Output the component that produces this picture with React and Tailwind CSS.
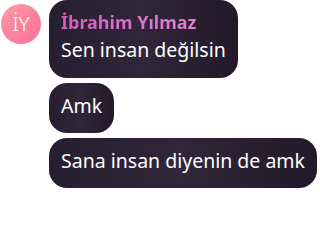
import React from 'react';

const bubble = 'rounded-[18px] bg-gradient-to-r from-[#261e31] via-[#2f2739] to-[#221a2b] px-3 text-white text-[19.5px] leading-[28px] whitespace-nowrap';

export default function App() {
    return (
        <div className="w-[320px] h-[240px] bg-white overflow-hidden font-['Noto_Sans','Open_Sans',sans-serif]">
            <div className="flex items-start gap-2 pl-[1px]">
                {/* Avatar */}
                <div className="mt-1 w-10 h-10 shrink-0 rounded-full bg-gradient-to-br from-[#ff9aa5] to-[#f76f98] flex items-center justify-center text-white text-[20px] leading-none font-light">
                    İY
                </div>

                {/* Messages */}
                <div className="flex flex-col items-start gap-[5px]">
                    <div className={`${bubble} pt-[10px] pb-[14px]`}>
                        <div className="text-[18px] leading-6 font-bold bg-gradient-to-r from-[#d25cbf] to-[#e887d4] bg-clip-text text-transparent">
                            İbrahim Yılmaz
                        </div>
                        <div className="mt-[2px]">Sen insan değilsin</div>
                    </div>
                    <div className={`${bubble} pt-[9px] pb-[13px]`}>Amk</div>
                    <div className={`${bubble} pt-[9px] pb-[13px]`}>Sana insan diyenin de amk</div>
                </div>
            </div>
        </div>
    );
}
